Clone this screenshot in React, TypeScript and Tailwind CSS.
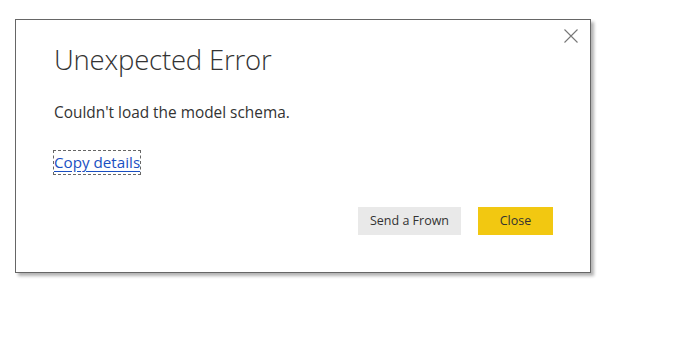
import React from "react";

export default function App() {
  return (
    <div className="w-[679px] h-[341px] bg-white pt-[19px] pl-[15px]" style={{ fontFamily: '"Open Sans", "Noto Sans", sans-serif' }}>
      <div className="relative flex flex-col w-[576px] h-[254px] border border-[#666666] bg-white shadow-[3px_3px_3px_rgba(0,0,0,0.3)] pl-[38px] pt-[22px]">
        <button className="absolute right-[12px] top-[9px] w-[14px] h-[14px]">
          <svg width="14" height="14" viewBox="0 0 14 14">
            <path d="M0.5 0.5 L13.5 13.5 M13.5 0.5 L0.5 13.5" stroke="#777777" strokeWidth="1.1" fill="none" />
          </svg>
        </button>
        <div className="text-[27.5px] font-light text-[#333333] leading-[36px] tracking-[-0.2px]">Unexpected Error</div>
        <div className="mt-[24px] text-[15.4px] text-[#333333] leading-[22px]">Couldn't load the model schema.</div>
        <div className="mt-[27px] flex">
          <a className="block outline outline-1 outline-dashed outline-[#666666] h-[23px] leading-[23px] text-[15.2px] text-[#1a4fc2] underline underline-offset-[3px] cursor-pointer">
            Copy details
          </a>
        </div>
        <div className="flex justify-end gap-[17px] pr-[37px] mt-[33px]">
          <button className="w-[103px] h-[28px] bg-[#e9e9e9] text-[12.5px] text-[#333333]">Send a Frown</button>
          <button className="w-[75px] h-[28px] bg-[#f2c811] text-[12.5px] text-[#333333]">Close</button>
        </div>
      </div>
    </div>
  );
}
